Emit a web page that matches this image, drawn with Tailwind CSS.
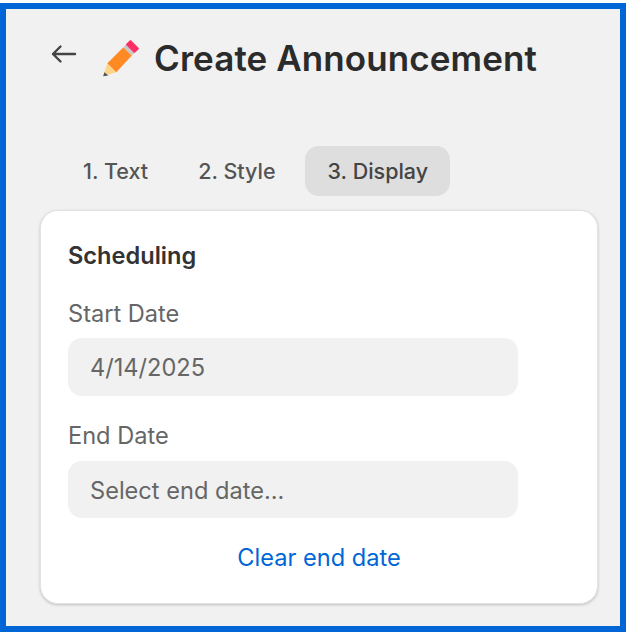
<!DOCTYPE html>
<html>
<head>
<meta charset="utf-8">
<script src="https://cdn.jsdelivr.net/npm/@tailwindcss/browser@4"></script>
</head>
<body class="bg-white">
<div class="w-[627px] h-[632px] pt-[3px] overflow-hidden font-['Inter',sans-serif]">
  <div class="w-[626px] h-[629px] border-[6px] border-[#0066d6] bg-[#f1f1f1] pt-[23px] pl-[34px] pr-[22px]">
    <div class="flex items-center h-[54px]">
      <svg class="w-[28px] h-[28px] ml-[10px] mb-[10px]" viewBox="0 0 28 28" fill="none" stroke="#444" stroke-width="2.4" stroke-linecap="round" stroke-linejoin="round"><path d="M25 14H3M10.5 6.5 3 14l7.5 7.5"/></svg>
      <svg class="w-[42px] h-[42px] ml-[22px] shrink-0" viewBox="0 0 40 40">
        <path d="M3 36.5 7 24l8.5 8.5z" fill="#fcd48a"/>
        <path d="M3 36.5 4.2 32.5l3.7 3.3z" fill="#555"/>
        <path d="M7 24 22.3 8.7l8 8L15.5 32.5z" fill="#ff8a24"/>
        <path d="M22.3 8.7 24.8 6.2l8 8-2.5 2.5z" fill="#c9c9c9"/>
        <path d="M25.8 6.2 29 3l7 7-3.2 3.2z" fill="#ff2f66" stroke="#ff2f66" stroke-width="2" stroke-linejoin="round"/>
      </svg>
      <h1 class="ml-[12px] mb-[2px] text-[35px] leading-[54px] font-semibold text-[#2b2b2b] tracking-[0.1px] whitespace-nowrap">Create Announcement</h1>
    </div>
    <div class="flex mt-[60px] h-[50px] items-center ml-[20px] text-[21.5px] font-medium text-[#555]">
      <div class="px-[23px] h-[50px] flex items-center">1. Text</div>
      <div class="pl-[22px] pr-[24px] ml-[5px] h-[50px] flex items-center">2. Style</div>
      <div class="pl-[23px] pr-[22px] ml-[5px] h-[50px] flex items-center rounded-[14px] bg-[#dedede] text-[#444]">3. Display</div>
    </div>
    <div class="mt-[14px] h-[394px] bg-white rounded-[18px] border border-[#e3e3e3] shadow-[0_1px_3px_rgba(0,0,0,0.2)] pl-[27px] pt-[27px]">
      <div class="text-[23.6px] leading-[36px] font-semibold text-[#333]">Scheduling</div>
      <div class="mt-[22px] text-[23.6px] leading-[36px] text-[#666]">Start Date</div>
      <div class="mt-[6px] w-[450px] h-[58px] rounded-[14px] bg-[#f1f1f1] flex items-center pl-[22px] pt-[2px] text-[23.6px] text-[#666]">4/14/2025</div>
      <div class="mt-[22px] text-[23.6px] leading-[36px] text-[#666]">End Date</div>
      <div class="mt-[7px] w-[450px] h-[57px] rounded-[14px] bg-[#f1f1f1] flex items-center pl-[22px] pt-[2px] text-[23.6px] text-[#666]">Select end date...</div>
      <div class="mt-[22px] text-center pr-[27px] text-[23.6px] leading-[36px] text-[#0066d6]">Clear end date</div>
    </div>
  </div>
</div>
</body>
</html>
